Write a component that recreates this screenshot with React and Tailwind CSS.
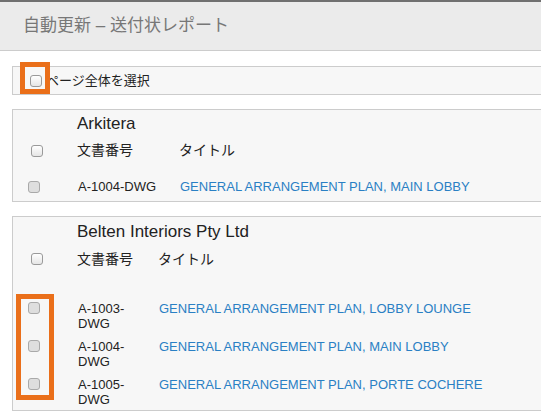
import React from 'react';

// checkbox look-alikes: header ones are white, row ones are grey
function Box({ row }) {
  return (
    <span
      className={`block w-[12px] h-[12px] rounded-[3px] border ${
        row
          ? 'border-[#a9a9a9] bg-[#dedede]'
          : 'border-[#9a9a9a] bg-gradient-to-b from-white to-[#e6e6e6]'
      }`}
    />
  );
}

const groups = [
  {
    name: 'Arkitera',
    docWidth: 'w-[102px]',
    rows: [{ no: ['A-1004-DWG'], title: 'GENERAL ARRANGEMENT PLAN, MAIN LOBBY' }],
  },
  {
    name: 'Belten Interiors Pty Ltd',
    docWidth: 'w-[81px]',
    rows: [
      { no: ['A-1003-', 'DWG'], title: 'GENERAL ARRANGEMENT PLAN, LOBBY LOUNGE' },
      { no: ['A-1004-', 'DWG'], title: 'GENERAL ARRANGEMENT PLAN, MAIN LOBBY' },
      { no: ['A-1005-', 'DWG'], title: 'GENERAL ARRANGEMENT PLAN, PORTE COCHERE' },
    ],
  },
];

function Group({ g }) {
  const multi = g.rows.length > 1;
  return (
    <div className="w-[545px] border border-[#cccccc] bg-[#f7f7f7]">
      <div className={`${multi ? 'h-[29px]' : 'h-[28px]'} flex items-center pl-[64px] text-[17px] text-[#222]`}>
        {g.name}
      </div>
      <div className={`${multi ? 'h-[26px]' : 'h-[25px]'} flex items-center text-[14px] text-[#222]`}>
        <div className="w-[64px] pl-[18px]">
          <Box />
        </div>
        <div className={g.docWidth}>文書番号</div>
        <div>タイトル</div>
      </div>
      {multi ? (
        <div className="pt-[29px]">
          {g.rows.map((r, i) => (
            <div key={i} className={`${i === g.rows.length - 1 ? 'h-[33px]' : 'h-[38px]'} flex items-start`}>
              <div className="w-[65px] pl-[15px] pt-[1px]">
                <Box row />
              </div>
              <div className={`${g.docWidth} text-[13px] leading-[15px] text-[#222]`}>
                {r.no[0]}
                <br />
                {r.no[1]}
              </div>
              <a className="text-[13px] leading-[15px] text-[#2a80c4]">{r.title}</a>
            </div>
          ))}
        </div>
      ) : (
        g.rows.map((r, i) => (
          <div key={i} className="h-[38px] pt-[10px] flex items-center">
            <div className="w-[65px] pl-[15px]">
              <Box row />
            </div>
            <div className={`${g.docWidth} text-[13px] text-[#222]`}>{r.no[0]}</div>
            <a className="text-[13px] text-[#2a80c4]">{r.title}</a>
          </div>
        ))
      )}
    </div>
  );
}

export default function App() {
  return (
    <div className="relative w-[541px] h-[416px] overflow-hidden bg-white font-['Liberation_Sans','Noto_Sans_CJK_JP',sans-serif]">
      <div className="h-[51px] border-t-2 border-b border-t-[#707070] border-b-[#cccccc] bg-[#ebebeb] flex items-center pl-[23px] text-[17px] text-[#777777]">
        自動更新 – 送付状レポート
      </div>
      <div className="pl-[12px] pt-[15px] flex flex-col gap-[14px]">
        <div className="w-[545px] h-[29px] border border-[#cccccc] bg-[#f7f7f7] flex items-center pl-[17px] text-[13px] text-[#222]">
          <Box />
          <span className="ml-[4px]">ページ全体を選択</span>
        </div>
        {groups.map((g) => (
          <Group key={g.name} g={g} />
        ))}
      </div>

      {/* orange call-out frames */}
      <div className="absolute left-[20px] top-[62px] w-[30px] h-[32px] border-[5px] border-[#ea6f1a]" />
      <div className="absolute left-[16px] top-[294px] w-[38px] h-[106px] border-[5px] border-[#ea6f1a]" />
    </div>
  );
}
